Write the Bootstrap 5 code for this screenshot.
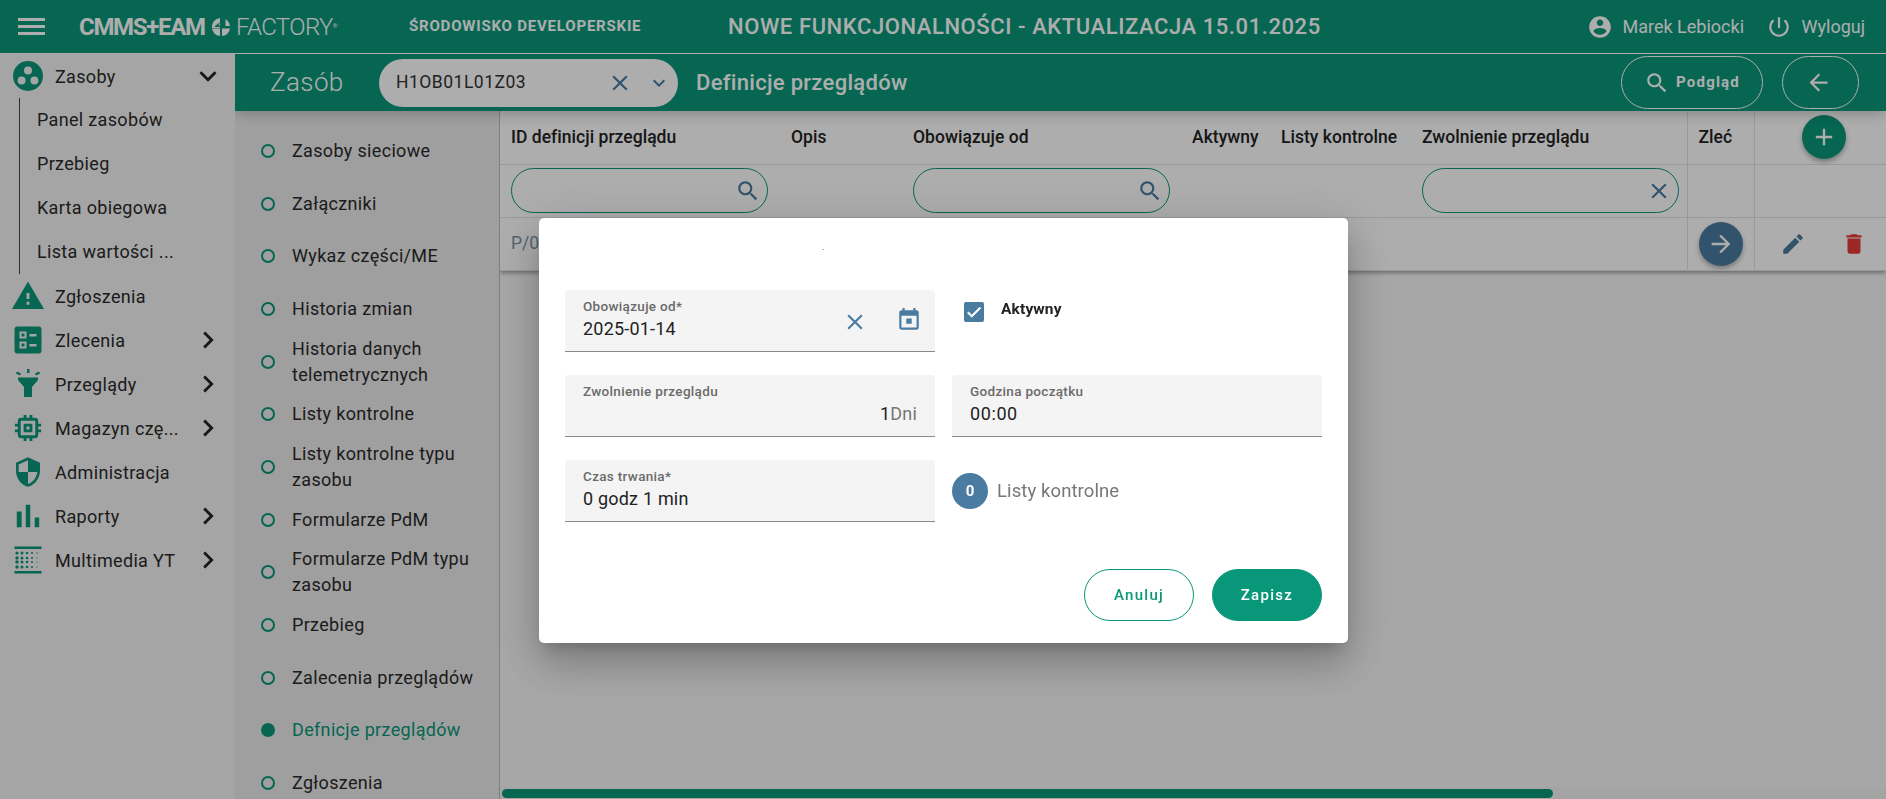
<!DOCTYPE html>
<html lang="pl"><head><meta charset="utf-8"><title>CMMS+EAM 4 Factory</title>
<link href="https://cdn.jsdelivr.net/npm/bootstrap@5.3.0/dist/css/bootstrap.min.css" rel="stylesheet">
<style>
:root{--g:#09977a;--b:#4a7ba0;}
html,body{height:100%;overflow:hidden}
body{font-family:Roboto,"Liberation Sans",sans-serif;color:#2a2a2a;background:#f7f7f7;font-size:18px}
svg{fill:currentColor;flex:none;display:block}
.top{height:54px;background:var(--g);color:#fff;border-bottom:1px solid #fff;position:relative;z-index:3}
.burger{width:27px;margin-left:18px;margin-right:34px;display:grid;gap:3.4px}
.burger i{display:block;height:3.4px;background:#fff}
.lg{width:336px;line-height:1;white-space:nowrap}
.lg1{font-weight:700;font-size:24px;letter-spacing:-1.3px;width:125px}
.lg2{font-weight:300;font-size:24px;letter-spacing:-.6px;margin-left:6px}
.lg3{font-size:6px;align-self:flex-start;margin-top:8px}
.env{font-weight:700;font-size:15px;letter-spacing:.8px;margin-left:-6px;width:319px;white-space:nowrap}
.news{font-weight:500;font-size:22px;letter-spacing:.58px;white-space:nowrap}
.who{white-space:nowrap;margin-right:21px}
.gap-u{margin-left:10px}.gap-p{margin-left:22px}.gap-w{margin-left:9.5px}
.side{width:235px;background:#f3f3f3;flex:none}
.mi{height:44px;padding-left:12px;letter-spacing:.33px;white-space:nowrap;position:relative}
.mi .ic{width:32px;height:32px;color:var(--g);margin-right:11px}
.mi .ch{width:34px;height:34px;position:absolute;right:10px;color:#222}
.subm{margin-left:19px;border-left:1px solid #444;padding-left:17px}
.subm div{height:44px;line-height:44px;letter-spacing:.33px;white-space:nowrap}
.sub{height:57px;background:var(--g);color:#fff;position:relative;z-index:2;box-shadow:0 3px 12px rgba(0,0,0,.22)}
.sub-t{font-size:26px;font-weight:300;margin-left:35px;width:109px;letter-spacing:.4px}
.pill{width:299px;height:48px;background:#fff;border-radius:24px;color:#333;padding-left:17px;letter-spacing:.5px;font-size:17.5px}
.pill svg{color:var(--b)}
.pill .x1{margin-right:14px}.pill .x2{margin-right:7px}
.def{font-size:22px;font-weight:500;margin-left:18px;letter-spacing:.3px}
.gh{background:transparent;color:#fff;border:1px solid #fff;border-radius:27px;height:53px;padding:0}
.gh:hover{color:#fff;border-color:#fff}
.gh1{width:142px;font-size:15px;letter-spacing:1.2px;font-weight:700;gap:6px}
.gh2{width:77px;margin:0 27px 0 19px;padding-right:5px}
.tabs{width:265px;background:#ebebeb;border-right:1px solid #bbb;padding-top:13.7px;flex:none;overflow:hidden}
.ti{height:52.67px;padding-left:26px;line-height:26px;letter-spacing:.33px}
.ti b{width:14px;height:14px;border:2.5px solid var(--g);border-radius:50%;margin-right:17px;flex:none}
.ti.on{color:var(--g)}.ti.on b{background:var(--g)}
.tbl{table-layout:fixed;width:1386px;--bs-table-bg:#fff;--bs-border-color:#e2e2e2;box-shadow:0 2px 4px rgba(0,0,0,.35);margin:0}
.tbl td,.tbl th{padding:0 0 0 11px;vertical-align:middle;white-space:nowrap;font-weight:500;color:#222;font-size:17.5px;letter-spacing:.03px}
.tbl tr{height:53px}
.tbl .dv{border-left:1px solid #e2e2e2}
.tbl td.pz{color:#7a94aa;font-weight:400}
.flt{height:45px;width:257px;border:1px solid var(--g);border-radius:23px;padding-right:6px}
.flt svg{color:var(--b)}
.fab{width:44px;height:44px;border-radius:50%;border:0;color:#fff;padding:0;box-shadow:0 3px 5px rgba(0,0,0,.3)}
.fab.a{background:var(--g);margin-left:-4px}.fab.c{background:var(--b)}
.ra{color:var(--b);gap:35px;padding-left:14px}
.del{color:#e63a3a}
.bar{height:12px;background:#f2f2f2;padding:2px 2px 1px}
.bar i{display:block;height:9px;width:1051px;border-radius:5px;background:var(--g)}
.modal-backdrop.show{opacity:.32}
.dlg{max-width:809px;margin:218px 0 0 539px}
.dlg .modal-content{height:425px;border:0;border-radius:5px;padding:0 26px;display:block;box-shadow:0 11px 15px -7px rgba(0,0,0,.2),0 24px 38px 3px rgba(0,0,0,.14),0 9px 46px 8px rgba(0,0,0,.12)}
.dash{height:72px;font-size:7px;padding:24px 0 0 257px;color:#555;line-height:16px}
.ff{height:62px;background:#f4f4f4;border-bottom:1px solid #8a8a8a;border-radius:4px 4px 0 0;padding:7px 18px 0;position:relative;width:370px}
.ff label{display:block;font-size:13.5px;font-weight:500;color:#6a6a6a;letter-spacing:.32px;line-height:19px}
.ff div{font-size:18px;line-height:25px;letter-spacing:.2px;color:#222}
.ff div.tm{letter-spacing:.6px}
.ff span{color:#777}
.ff svg{position:absolute;color:var(--b)}
.ff .s1{right:67px;top:19px}.ff .s2{right:13px;top:17px}
.frow{height:85px;gap:17px}
.aktyw{font-size:15.5px;font-weight:700;letter-spacing:.15px;margin:8px 0 0 17px;color:#222;line-height:22px}
.cb{width:20px;height:20px;background:var(--b);border-radius:2px;margin:12px 0 0 12px;color:#fff}
.cb svg{stroke:#fff;stroke-width:1.2}
.zero{width:36px;height:36px;border-radius:50%;background:var(--b);color:#fff;font-weight:700;font-size:15px;margin:13px 9px 0 0}
.lk{color:#777;font-size:18.5px;letter-spacing:.1px;margin-top:18px;line-height:26px}
.act{position:absolute;right:26px;bottom:22px;gap:18px}
.mb1{width:110px;height:52px;border-radius:26px;font-weight:500;font-size:15px;letter-spacing:1.3px;padding:0;border:1px solid var(--g)}
.mb1.o{background:#fff;color:var(--g)}.mb1.f{background:var(--g);color:#fff}
</style></head><body class="d-flex flex-column">
<header class="top d-flex align-items-center flex-shrink-0">
  <div class="burger"><i></i><i></i><i></i></div>
  <div class="lg d-flex align-items-center">
    <span class="lg1">CMMS+EAM</span>
    <svg width="18" height="18" viewBox="0 0 18 18" class="ms-2"><path d="M8 0v7.500H6.600L8 4 2.600 8.600V9H8v1H0a9 9 0 0 1 8-10zM10 0a9 9 0 0 1 8 8h-4.500V0.900L10 0zM0 10.600h8V18a9 9 0 0 1-8-7.400zM10 10.600h8A9 9 0 0 1 10 18z"/></svg>
    <span class="lg2">FACTORY</span><span class="lg3">®</span>
  </div>
  <div class="env">ŚRODOWISKO DEVELOPERSKIE</div>
  <div class="news">NOWE FUNKCJONALNOŚCI - AKTUALIZACJA 15.01.2025</div>
  <div class="ms-auto d-flex align-items-center who">
    <svg width="26" height="26" viewBox="0 0 24 24"><path d="M12 2C6.480 2 2 6.480 2 12s4.480 10 10 10 10-4.480 10-10S17.520 2 12 2zm0 3c1.660 0 3 1.340 3 3s-1.340 3-3 3-3-1.340-3-3 1.340-3 3-3zm0 14.200c-2.500 0-4.710-1.280-6-3.220.03-1.990 4-3.080 6-3.080 1.990 0 5.970 1.090 6 3.080-1.290 1.940-3.500 3.220-6 3.220z"/></svg>
    <span class="gap-u">Marek Lebiocki</span>
    <svg class="gap-p" width="26" height="26" viewBox="0 0 24 24"><path d="M13 3h-2v10h2V3zm4.830 2.170l-1.420 1.420C17.990 7.860 19 9.810 19 12c0 3.870-3.130 7-7 7s-7-3.130-7-7c0-2.190 1.010-4.140 2.580-5.420L6.170 5.170C4.230 6.820 3 9.260 3 12c0 4.970 4.030 9 9 9s9-4.030 9-9c0-2.740-1.230-5.180-3.170-6.830z"/></svg>
    <span class="gap-w">Wyloguj</span>
  </div>
</header>
<div class="d-flex flex-grow-1 overflow-hidden">
  <nav class="side">
    <div class="mi d-flex align-items-center"><svg class="ic" viewBox="0 0 32 32"><path fill-rule="evenodd" d="M16 1a15 15 0 1 0 0 30 15 15 0 0 0 0-30zm0 5.500a4 4 0 1 1 0 8 4 4 0 0 1 0-8zM9.600 16.500a4 4 0 1 1 0 8 4 4 0 0 1 0-8zm12.800 0a4 4 0 1 1 0 8 4 4 0 0 1 0-8z"/></svg>Zasoby<svg class="ch" viewBox="0 0 24 24"><path d="M16.590 8.590L12 13.170 7.410 8.590 6 10l6 6 6-6z"/></svg></div>
    <div class="subm"><div>Panel zasobów</div><div>Przebieg</div><div>Karta obiegowa</div><div>Lista wartości ...</div></div>
    <div class="mi d-flex align-items-center"><svg class="ic" viewBox="1 2 22 20"><path d="M1 21h22L12 2 1 21zm12-3h-2v-2h2v2zm0-4h-2v-4h2v4z"/></svg>Zgłoszenia</div>
    <div class="mi d-flex align-items-center"><svg class="ic" viewBox="-2.500 -2.500 32 32"><path fill-rule="evenodd" d="M3 0h21a3 3 0 0 1 3 3v21a3 3 0 0 1-3 3H3a3 3 0 0 1-3-3V3a3 3 0 0 1 3-3zM5 5v7h7V5zM7 7h3v3H7zM5 15v7h7v-7zM7 17h3v3H7zM15 7.500v2.500h7V7.500zM15 17.500v2.500h7v-2.500z"/></svg>Zlecenia<svg class="ch" viewBox="0 0 24 24"><path d="M10 6L8.590 7.410 13.170 12l-4.580 4.590L10 18l6-6z"/></svg></div>
    <div class="mi d-flex align-items-center"><svg class="ic" viewBox="0 0 32 32"><path d="M6 9.500h20v2.500l-6 7v10h-8V19l-6-7zM15 1h2.500v4H15zM5 3.500l4 2-1 2-4-2zM27 3.500l-4 2 1 2 4-2z"/></svg>Przeglądy<svg class="ch" viewBox="0 0 24 24"><path d="M10 6L8.590 7.410 13.170 12l-4.580 4.590L10 18l6-6z"/></svg></div>
    <div class="mi d-flex align-items-center"><svg class="ic" viewBox="1 1 22 22"><path d="M15 9H9v6h6V9zm-2 4h-2v-2h2v2zm8-2V9h-2V7c0-1.100-.9-2-2-2h-2V3h-2v2h-2V3H9v2H7c-1.100 0-2 .9-2 2v2H3v2h2v2H3v2h2v2c0 1.100.9 2 2 2h2v2h2v-2h2v2h2v-2h2c1.100 0 2-.9 2-2v-2h2v-2h-2v-2h2zm-4 6H7V7h10v10z"/></svg>Magazyn czę...<svg class="ch" viewBox="0 0 24 24"><path d="M10 6L8.590 7.410 13.170 12l-4.580 4.590L10 18l6-6z"/></svg></div>
    <div class="mi d-flex align-items-center"><svg class="ic" viewBox="0 0 24 24"><path d="M12 1L3 5v6c0 5.550 3.840 10.740 9 12 5.160-1.260 9-6.450 9-12V5l-9-4zm0 10.990h7c-.53 4.120-3.280 7.790-7 8.940V12H5V6.300l7-3.110v8.800z"/></svg>Administracja</div>
    <div class="mi d-flex align-items-center"><svg class="ic" viewBox="2 2 20 20"><path d="M5 9.200h3V19H5zM10.600 5h2.800v14h-2.800zm5.600 8H19v6h-2.800z"/></svg>Raporty<svg class="ch" viewBox="0 0 24 24"><path d="M10 6L8.590 7.410 13.170 12l-4.580 4.590L10 18l6-6z"/></svg></div>
    <div class="mi d-flex align-items-center"><svg class="ic" viewBox="0 0 32 32"><path d="M2.500 2.500h27v2.500h-27zM2.500 27h27v2.500h-27z"/><g><circle cx="5" cy="9" r="1.600"/><circle cx="10" cy="9" r="1.500"/><circle cx="15" cy="9" r="1.300"/><circle cx="20" cy="9" r="1"/><circle cx="25" cy="9" r=".7"/><circle cx="5" cy="14" r="1.700"/><circle cx="10" cy="14" r="1.500"/><circle cx="15" cy="14" r="1.300"/><circle cx="20" cy="14" r="1"/><circle cx="25" cy="14" r=".6"/><circle cx="5" cy="18" r="1.700"/><circle cx="10" cy="18" r="1.500"/><circle cx="15" cy="18" r="1.300"/><circle cx="20" cy="18" r="1"/><circle cx="25" cy="18" r=".6"/><circle cx="5" cy="23" r="1.700"/><circle cx="10" cy="23" r="1.500"/><circle cx="15" cy="23" r="1.300"/><circle cx="20" cy="23" r="1"/><circle cx="25" cy="23" r=".6"/></g></svg>Multimedia YT<svg class="ch" viewBox="0 0 24 24"><path d="M10 6L8.590 7.410 13.170 12l-4.580 4.590L10 18l6-6z"/></svg></div>
  </nav>
  <main class="d-flex flex-column flex-grow-1 overflow-hidden">
    <section class="sub d-flex align-items-center flex-shrink-0">
      <div class="sub-t">Zasób</div>
      <div class="pill d-flex align-items-center">H1OB01L01Z03
        <svg class="ms-auto x1" width="26" height="26" viewBox="0 0 24 24"><path d="M19 6.410L17.590 5 12 10.590 6.410 5 5 6.410 10.590 12 5 17.590 6.410 19 12 13.410 17.590 19 19 17.590 13.410 12z"/></svg>
        <svg class="x2" width="24" height="24" viewBox="0 0 24 24"><path d="M16.590 8.590L12 13.170 7.410 8.590 6 10l6 6 6-6z"/></svg>
      </div>
      <div class="def">Definicje przeglądów</div>
      <button class="btn gh gh1 ms-auto d-flex align-items-center justify-content-center"><svg width="26" height="26" viewBox="0 0 24 24"><path d="M15.500 14h-.79l-.28-.27C15.410 12.590 16 11.110 16 9.500 16 5.910 13.090 3 9.500 3S3 5.910 3 9.500 5.910 16 9.500 16c1.610 0 3.090-.59 4.230-1.570l.27.28v.79l5 4.990L20.490 19l-4.990-5zm-6 0C7.010 14 5 11.990 5 9.500S7.010 5 9.500 5 14 7.010 14 9.500 11.990 14 9.500 14z"/></svg>Podgląd</button>
      <button class="btn gh gh2 d-flex align-items-center justify-content-center"><svg width="27" height="27" viewBox="0 0 24 24"><path d="M20 11H7.830l5.590-5.590L12 4l-8 8 8 8 1.410-1.410L7.830 13H20v-2z"/></svg></button>
    </section>
    <div class="d-flex flex-grow-1 overflow-hidden">
      <aside class="tabs">
        <div class="ti d-flex align-items-center"><b></b>Zasoby sieciowe</div>
        <div class="ti d-flex align-items-center"><b></b>Załączniki</div>
        <div class="ti d-flex align-items-center"><b></b>Wykaz części/ME</div>
        <div class="ti d-flex align-items-center"><b></b>Historia zmian</div>
        <div class="ti d-flex align-items-center"><b></b><span>Historia danych<br>telemetrycznych</span></div>
        <div class="ti d-flex align-items-center"><b></b>Listy kontrolne</div>
        <div class="ti d-flex align-items-center"><b></b><span>Listy kontrolne typu<br>zasobu</span></div>
        <div class="ti d-flex align-items-center"><b></b>Formularze PdM</div>
        <div class="ti d-flex align-items-center"><b></b><span>Formularze PdM typu<br>zasobu</span></div>
        <div class="ti d-flex align-items-center"><b></b>Przebieg</div>
        <div class="ti d-flex align-items-center"><b></b>Zalecenia przeglądów</div>
        <div class="ti on d-flex align-items-center"><b></b>Defnicje przeglądów</div>
        <div class="ti d-flex align-items-center"><b></b>Zgłoszenia</div>
      </aside>
      <div class="d-flex flex-column flex-grow-1 overflow-hidden">
        <div class="flex-grow-1">
        <table class="table tbl">
          <colgroup><col style="width:280px"><col style="width:122px"><col style="width:279px"><col style="width:89px"><col style="width:141px"><col style="width:276px"><col style="width:67px"><col></colgroup>
          <tr><th>ID definicji przeglądu</th><th>Opis</th><th>Obowiązuje od</th><th>Aktywny</th><th>Listy kontrolne</th><th>Zwolnienie przeglądu</th><th class="dv">Zleć</th><th class="dv text-center"><button class="btn fab a d-inline-flex align-items-center justify-content-center"><svg width="28" height="28" viewBox="0 0 24 24"><path d="M19 13h-6v6h-2v-6H5v-2h6V5h2v6h6v2z"/></svg></button></th></tr>
          <tr><td><div class="flt d-flex align-items-center justify-content-end"><svg width="26" height="26" viewBox="0 0 24 24"><path d="M15.500 14h-.79l-.28-.27C15.410 12.590 16 11.110 16 9.500 16 5.910 13.090 3 9.500 3S3 5.910 3 9.500 5.910 16 9.500 16c1.610 0 3.090-.59 4.230-1.570l.27.28v.79l5 4.990L20.490 19l-4.990-5zm-6 0C7.010 14 5 11.990 5 9.500S7.010 5 9.500 5 14 7.010 14 9.500 11.990 14 9.500 14z"/></svg></div></td><td></td>
          <td><div class="flt d-flex align-items-center justify-content-end"><svg width="26" height="26" viewBox="0 0 24 24"><path d="M15.500 14h-.79l-.28-.27C15.410 12.590 16 11.110 16 9.500 16 5.910 13.090 3 9.500 3S3 5.910 3 9.500 5.910 16 9.500 16c1.610 0 3.090-.59 4.230-1.570l.27.28v.79l5 4.990L20.490 19l-4.990-5zm-6 0C7.010 14 5 11.990 5 9.500S7.010 5 9.500 5 14 7.010 14 9.500 11.990 14 9.500 14z"/></svg></div></td><td></td><td></td>
          <td><div class="flt d-flex align-items-center justify-content-end"><svg width="26" height="26" viewBox="0 0 24 24"><path d="M19 6.410L17.590 5 12 10.590 6.410 5 5 6.410 10.590 12 5 17.590 6.410 19 12 13.410 17.590 19 19 17.590 13.410 12z"/></svg></div></td><td class="dv"></td><td class="dv"></td></tr>
          <tr><td class="pz">P/0</td><td></td><td></td><td></td><td></td><td></td><td class="dv"><button class="btn fab c d-flex align-items-center justify-content-center"><svg width="28" height="28" viewBox="0 0 24 24"><path d="M12 4l-1.410 1.410L16.170 11H4v2h12.170l-5.580 5.590L12 20l8-8z"/></svg></button></td><td class="dv"><div class="ra d-flex align-items-center"><svg width="26" height="26" viewBox="0 0 24 24"><path d="M3 17.250V21h3.750L17.810 9.940l-3.750-3.750L3 17.250zM20.710 7.040c.39-.39.39-1.020 0-1.410l-2.340-2.340c-.39-.39-1.020-.39-1.410 0l-1.830 1.830 3.750 3.750 1.830-1.830z"/></svg><svg class="del" width="26" height="26" viewBox="0 0 24 24"><path d="M6 19c0 1.100.9 2 2 2h8c1.100 0 2-.9 2-2V7H6v12zM19 4h-3.500l-1-1h-5l-1 1H5v2h14V4z"/></svg></div></td></tr>
        </table>
        </div>
        <div class="bar"><i></i></div>
      </div>
    </div>
  </main>
</div>
<div class="modal-backdrop show"></div>
<div class="modal d-block" tabindex="-1">
  <div class="modal-dialog dlg">
    <div class="modal-content position-relative">
      <div class="dash">-</div>
      <div class="d-flex frow">
        <div class="ff"><label>Obowiązuje od*</label><div>2025-01-14</div>
          <svg class="s1" width="26" height="26" viewBox="0 0 24 24"><path d="M19 6.410L17.590 5 12 10.590 6.410 5 5 6.410 10.590 12 5 17.590 6.410 19 12 13.410 17.590 19 19 17.590 13.410 12z"/></svg>
          <svg class="s2" width="26" height="26" viewBox="0 0 24 24"><path d="M14.500 10.500h-5v5h5zM16 1v2H8V1H6v2H5c-1.110 0-1.990.9-1.990 2L3 19c0 1.100.89 2 2 2h14c1.100 0 2-.9 2-2V5c0-1.100-.9-2-2-2h-1V1h-2zm3 18H5V8h14v11z"/></svg>
        </div>
        <div class="d-flex align-items-start"><div class="cb d-flex align-items-center justify-content-center"><svg width="18" height="18" viewBox="0 0 24 24"><path d="M9 16.200 4.800 12l-1.400 1.400L9 19 21 7l-1.400-1.400z"/></svg></div><div class="aktyw">Aktywny</div></div>
      </div>
      <div class="d-flex frow">
        <div class="ff"><label>Zwolnienie przeglądu</label><div class="text-end">1<span>Dni</span></div></div>
        <div class="ff"><label>Godzina początku</label><div class="tm">00:00</div></div>
      </div>
      <div class="d-flex frow">
        <div class="ff"><label>Czas trwania*</label><div>0 godz 1 min</div></div>
        <div class="d-flex align-items-start"><div class="zero d-flex align-items-center justify-content-center">0</div><div class="lk">Listy kontrolne</div></div>
      </div>
      <div class="act d-flex"><button class="btn mb1 o">Anuluj</button><button class="btn mb1 f">Zapisz</button></div>
    </div>
  </div>
</div>
<script src="https://cdn.jsdelivr.net/npm/bootstrap@5.3.0/dist/js/bootstrap.bundle.min.js"></script>
</body></html>
